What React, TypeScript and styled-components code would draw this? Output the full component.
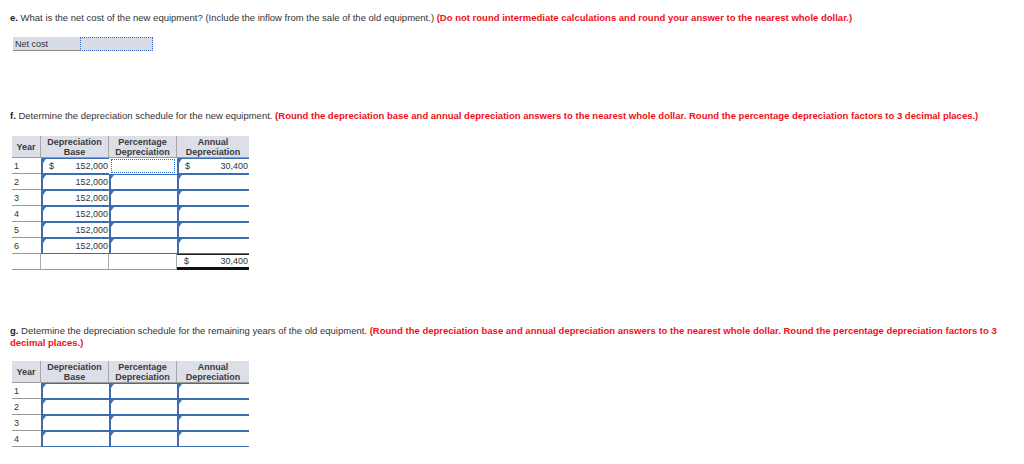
import styled, { createGlobalStyle } from 'styled-components'

const GlobalStyle = createGlobalStyle`
  html, body {
    margin: 0;
    padding: 0;
    background: #fff;
  }
  body {
    font-family: "Liberation Sans", Arial, Helvetica, sans-serif;
    color: #333;
  }
`

type Row = {
  year: number
  base?: string
  pct?: string
  annual?: string
  dollarBase?: boolean
  dollarAnnual?: boolean
  focusPct?: boolean
}

const newRows: Row[] = [
  { year: 1, base: '152,000', dollarBase: true, focusPct: true, annual: '30,400', dollarAnnual: true },
  { year: 2, base: '152,000' },
  { year: 3, base: '152,000' },
  { year: 4, base: '152,000' },
  { year: 5, base: '152,000' },
  { year: 6, base: '152,000' },
]

const oldRows: Row[] = [{ year: 1 }, { year: 2 }, { year: 3 }, { year: 4 }]

function Question({ label, text, note }: { label: string; text: string; note: string }) {
  return (
    <QuestionText>
      <b>{label}</b> {text} <Red>{note}</Red>
    </QuestionText>
  )
}

function Money({ value, dollar }: { value?: string; dollar?: boolean }) {
  return (
    <>
      <Dollar>{dollar ? '$' : ''}</Dollar>
      <Amount>{value}</Amount>
    </>
  )
}

function DepTable({ rows, total }: { rows: Row[]; total?: string }) {
  return (
    <Grid>
      <HeadCell>Year</HeadCell>
      <HeadCell>Depreciation<br />Base</HeadCell>
      <HeadCell>Percentage<br />Depreciation</HeadCell>
      <HeadCell $last>Annual<br />Depreciation</HeadCell>
      {rows.map((r) => (
        <RowGroup key={r.year}>
          <YearCell>{r.year}</YearCell>
          <InputCell>
            <Money value={r.base} dollar={r.dollarBase} />
          </InputCell>
          <InputCell $focus={r.focusPct}>{r.pct}</InputCell>
          <InputCell>
            <Money value={r.annual} dollar={r.dollarAnnual} />
          </InputCell>
        </RowGroup>
      ))}
      {total && (
        <>
          <TotalCell />
          <TotalCell />
          <TotalCell />
          <TotalSum>
            <Money value={total} dollar />
          </TotalSum>
        </>
      )}
    </Grid>
  )
}

export default function App() {
  return (
    <>
      <GlobalStyle />
      <Page>
        <Question
          label="e."
          text="What is the net cost of the new equipment? (Include the inflow from the sale of the old equipment.)"
          note="(Do not round intermediate calculations and round your answer to the nearest whole dollar.)"
        />
        <NetCostRow>
          <NetLabel>Net cost</NetLabel>
          <NetInput />
        </NetCostRow>

        <Section $top={59}>
          <Question
            label="f."
            text="Determine the depreciation schedule for the new equipment."
            note="(Round the depreciation base and annual depreciation answers to the nearest whole dollar. Round the percentage depreciation factors to 3 decimal places.)"
          />
        </Section>
        <TableWrap $top={15}>
          <DepTable rows={newRows} total="30,400" />
        </TableWrap>

        <Section $top={55}>
          <Question
            label="g."
            text="Determine the depreciation schedule for the remaining years of the old equipment."
            note="(Round the depreciation base and annual depreciation answers to the nearest whole dollar. Round the percentage depreciation factors to 3 decimal places.)"
          />
        </Section>
        <TableWrap $top={13}>
          <DepTable rows={oldRows} />
        </TableWrap>
      </Page>
    </>
  )
}

const Page = styled.div`
  width: 1024px;
  height: 464px;
  padding: 12px 12px 0 10px;
  box-sizing: border-box;
  overflow: hidden;
`

const QuestionText = styled.p`
  margin: 0;
  font-size: 9.5px;
  line-height: 11.5px;
  color: #333;
  b {
    font-weight: bold;
    color: #222;
  }
`

const Red = styled.span`
  color: #f0101a;
  font-weight: bold;
`

const NetCostRow = styled.div`
  display: flex;
  margin: 13px 0 0 3px;
  height: 14px;
`

const NetLabel = styled.div`
  width: 65px;
  padding-left: 2px;
  background: #d9dce6;
  border-bottom: 1px solid #8a8a8a;
  font-size: 9px;
  line-height: 14px;
  color: #333;
`

const NetInput = styled.div`
  width: 73px;
  box-sizing: border-box;
  background: #d9dce6;
  border: 1px dotted #3d6fc2;
`

const Section = styled.div<{ $top: number }>`
  margin-top: ${({ $top }) => $top}px;
  width: 1000px;
`

const TableWrap = styled.div<{ $top: number }>`
  margin: ${({ $top }) => $top}px 0 0 2px;
`

const Grid = styled.div`
  display: grid;
  grid-template-columns: 29px 68px 68px 72px;
  grid-template-rows: 22px;
  grid-auto-rows: 16px;
  font-size: 9px;
  color: #333;
`

const RowGroup = styled.div`
  display: contents;
`

const HeadCell = styled.div<{ $last?: boolean }>`
  background: #dcdfe8;
  border-right: ${({ $last }) => ($last ? 'none' : '1px solid #a8a8a8')};
  border-bottom: 1px solid #9a9a9a;
  display: flex;
  align-items: center;
  justify-content: center;
  text-align: center;
  font-weight: bold;
  line-height: 10px;
  color: #3a3a3a;
`

const YearCell = styled.div`
  border-bottom: 1px solid #9a9a9a;
  padding-left: 2px;
  display: flex;
  align-items: center;
`

const InputCell = styled.div<{ $focus?: boolean }>`
  position: relative;
  box-sizing: border-box;
  display: flex;
  align-items: center;
  padding: 0 1px 0 6px;
  background: #fff;
  border-top: 1px solid #3d6cb3;
  border-bottom: 1px solid #3d6cb3;
  border-left: 2px solid #3d6cb3;
  ${({ $focus }) =>
    $focus &&
    `
    border: 1px dotted #2e6ed8;
    margin: 1px 2px 1px 2px;
  `}
  &::before {
    content: '';
    position: absolute;
    top: 0;
    left: 0;
    border-top: 4px solid #3d73c8;
    border-right: 3px solid transparent;
    display: ${({ $focus }) => ($focus ? 'none' : 'block')};
  }
`

const Dollar = styled.span`
  width: 14px;
`

const Amount = styled.span`
  flex: 1;
  text-align: right;
`

const TotalCell = styled.div`
  border-right: 1px solid #a8a8a8;
  border-bottom: 1px solid #9a9a9a;
`

const TotalSum = styled.div`
  box-sizing: border-box;
  display: flex;
  align-items: center;
  padding: 0 1px 0 7px;
  border-top: 1px solid #222;
  border-bottom: 3px solid #111;
`
